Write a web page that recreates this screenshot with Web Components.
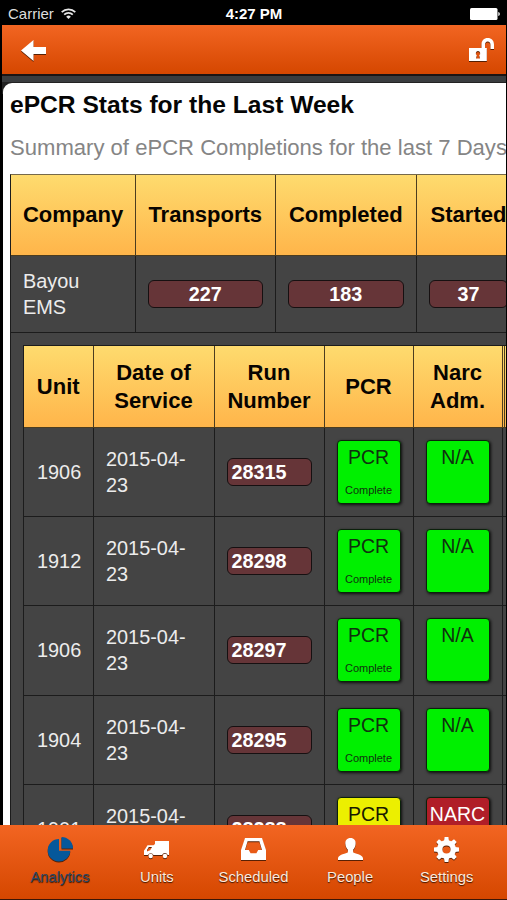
<!DOCTYPE html>
<html lang="en">
<head>
<meta charset="utf-8">
<title>ePCR Stats</title>
<style>
  html, body {
    margin: 0;
    height: 100%;
    overflow: hidden;
    background: #000;
    font-family: "Liberation Sans", Arial, sans-serif;
  }
</style>
</head>
<body>
<stats-app></stats-app>

<script>
/* Icon shapes, all drawn with the current text color */
var Icons = {
  back: '<path d="M0 10.5 12.5 0v7H25v7H12.5v7z"/>',
  unlock: '<path fill-rule="evenodd" d="M0 10h12.5V6.5C12.500 2.500 15 0 18.700 0S25 2.500 25 6.500V11h-3.500V7C21.500 4.600 20.500 3.400 18.700 3.400S16 4.600 16 7v3h1.800v13H0zM9 13a2.300 2.300 0 0 0-1.200 4.200L7 20.500h4l-.8-3.300A2.300 2.300 0 0 0 9 13z"/>',
  pie: '<path d="M11 2v11.800h11.300A11.300 11.300 0 1 1 11 2z"/><path d="M13.500 0A11.500 11.500 0 0 1 25 11.500H13.500z"/>',
  truck: '<path fill-rule="evenodd" d="M11 0h14v14h-1.300a3 3 0 0 0-5.600 0H9.500a3 3 0 0 0-5.500 0H0V9.500L1.200 8 3.500 4.300H9.500L11 3zM4.800 6 3 9v1.500L6.200 9.200 8 6z"/><circle cx="6.700" cy="15" r="2.200"/><circle cx="21" cy="15" r="2.200"/>',
  inbox: '<path fill-rule="evenodd" d="M4 0h17l4 12v10H0V12zM6.600 3.300 4 12h3.800l1.800 3.300h5.800l1.800-3.300H21L18.400 3.300z"/>',
  person: '<path d="M12.500 0C16 0 18 2.500 17.600 6c-.3 2.800-1.300 4.500-2.500 5.700v2.500c1 1.300 9.900 2.300 9.900 6V22H0v-1.800c0-3.700 8.900-4.700 9.900-6v-2.500C8.700 10.500 7.700 8.800 7.400 6 7 2.500 9 0 12.500 0z"/>',
  gear: '<circle cx="12.500" cy="12.500" r="6.800" fill="none" stroke="currentColor" stroke-width="5.400"/>'
    + [0, 45, 90, 135, 180, 225, 270, 315].map((angle) =>
      `<path d="M10 4 10.600 0h3.800L15 4z" transform="rotate(${angle} 12.500 12.500)"/>`).join('')
}

/* Fills the shadow root of an element with its styles and markup */
function render(element, html) {
  element.attachShadow({ mode: 'open' }).innerHTML = html
}

class AppIcon extends HTMLElement {
  connectedCallback() {
    var width = this.getAttribute('width') || 25
    var height = this.getAttribute('height') || 25

    render(this, `
      <style>
        :host {
          display: block;
          line-height: 0;
        }

        svg {
          fill: currentColor;
          overflow: visible;
          filter: drop-shadow(0 1px 0.5px rgba(40, 15, 0, .75));
        }
      </style>
      <svg width="${width}" height="${height}" viewBox="0 0 ${width} ${height}">
        ${Icons[this.getAttribute('name')]}
      </svg>`)
  }
}

class StatusBar extends HTMLElement {
  connectedCallback() {
    render(this, `
      <style>
        :host {
          display: grid;
          grid-template-columns: 1fr auto 1fr;
          align-items: center;
          flex: none;
          box-sizing: border-box;
          height: 25px;
          padding: 3px 7px 0 8px;
          background: #000;
          color: #ddd;
          font-size: 15px;
          line-height: 22px;
        }

        .carrier, .battery {
          display: flex;
          align-items: center;
        }

        .carrier { gap: 7px; }
        .wifi { margin-top: -2px; }
        .time { color: #fff; font-weight: bold; }
        .battery { justify-content: flex-end; }
      </style>
      <div class="carrier">
        <span>Carrier</span>
        <svg class="wifi" width="15" height="11" viewBox="0 0 15 11" fill="none" stroke="#e6e6e6" stroke-width="1.700">
          <path d="M.7 4.200a9.600 9.600 0 0 1 13.600 0M3.200 6.700a6.100 6.100 0 0 1 8.600 0"/>
          <path d="M7.500 11 5.200 8.700a3.300 3.300 0 0 1 4.600 0z" fill="#e6e6e6" stroke="none"/>
        </svg>
      </div>
      <div class="time">4:27 PM</div>
      <div class="battery">
        <svg width="30" height="12" viewBox="0 0 30 12" fill="#fff">
          <rect width="27.500" height="12" rx="1.500"/>
          <path d="M28.300 4c1 .3 1.500 1 1.500 2s-.5 1.700-1.500 2z"/>
        </svg>
      </div>`)
  }
}

class NavBar extends HTMLElement {
  connectedCallback() {
    render(this, `
      <style>
        :host {
          display: flex;
          justify-content: space-between;
          align-items: center;
          flex: none;
          box-sizing: border-box;
          height: 51px;
          margin: 0 1px 0 2px;
          padding: 2px 12px 0 19px;
          border-bottom: 2px solid #1b1413;
          background: linear-gradient(#f26522, #d54700);
          color: #fff;
        }

        [name="unlock"] { margin-bottom: 2px; }
      </style>
      <app-icon name="back" height="21"></app-icon>
      <app-icon name="unlock" height="23"></app-icon>`)
  }
}

/* Red rounded counter, centered unless it is placed with align="left" */
class CountPill extends HTMLElement {
  connectedCallback() {
    render(this, `
      <style>
        :host {
          display: block;
          box-sizing: border-box;
          height: 28px;
          padding: 0 4px;
          border: 1px solid #161011;
          border-radius: 6px;
          background: #663538;
          color: #fff;
          font-size: 19.800px;
          font-weight: bold;
          line-height: 26px;
          text-align: center;
        }

        :host([align="left"]) { text-align: left; }
      </style>
      <slot></slot>`)
  }
}

/* Square colored by its state: complete, pending or missing */
class StateBadge extends HTMLElement {
  connectedCallback() {
    render(this, `
      <style>
        :host {
          display: flex;
          flex-direction: column;
          justify-content: space-between;
          align-items: center;
          box-sizing: border-box;
          width: 64px;
          height: 64px;
          padding: 4px 0 6px;
          border: 1px solid #0b210b;
          border-radius: 4px;
          background: #00f000;
          box-shadow: 1px 1px 3px rgba(0, 0, 0, .8);
          color: #10300f;
          font-size: 19.500px;
          line-height: 24px;
        }

        :host([state="pending"]) { background: #ecef00; color: #191900; }
        :host([state="missing"]) { background: #b01e28; color: #fff; }

        .note { font-size: 11px; line-height: 14px; }
      </style>
      <span><slot></slot></span>
      <span class="note"><slot name="note"></slot></span>`)
  }
}

var tableStyle = `
  .row { display: grid; }

  .row > * {
    display: flex;
    align-items: center;
    box-sizing: border-box;
    border-right: 1px solid #1c1c1c;
    border-bottom: 1px solid #1c1c1c;
  }

  .head > * {
    justify-content: center;
    background: linear-gradient(#fedb6e, #ffb54a);
    border-color: #4c3d20;
    color: #080400;
    font-size: 22px;
    font-weight: bold;
    line-height: 28px;
    text-align: center;
  }
`

class RunTable extends HTMLElement {
  connectedCallback() {
    var runs = [
      ['1906', '28315'],
      ['1912', '28298'],
      ['1906', '28297'],
      ['1904', '28295'],
      ['1901', '28288', true]
    ]

    render(this, `
      <style>
        ${tableStyle}

        :host {
          display: block;
          width: 580px;
          border-left: 1px solid #1c1c1c;
          border-top: 1px solid #1c1c1c;
        }

        .row {
          grid-template-columns: 69.500px 121px 110px 89px 89px 2px 98px;
          height: 89.200px;
        }

        .head { height: 82px; }
        .head > * { padding-top: 1px; }
        .body > * { padding: 0 12px; }
        .body > :nth-child(1) { padding-left: 13px; }
        .body > :nth-child(2) { padding-left: 12.500px; }
        .body > :nth-child(3) { padding-right: 12px; }
        count-pill { flex: 1; }
        state-badge { flex: none; }
      </style>
      <div class="row head">
        <div>Unit</div>
        <div>Date of<br>Service</div>
        <div>Run<br>Number</div>
        <div>PCR</div>
        <div>Narc<br>Adm.</div>
        <div></div>
        <div></div>
      </div>
      ${runs.map(([unit, number, open]) => `
        <div class="row body">
          <div>${unit}</div>
          <div>2015-04-<br>23</div>
          <div><count-pill align="left">${number}</count-pill></div>
          <div>${open
            ? '<state-badge state="pending">PCR</state-badge>'
            : '<state-badge>PCR<span slot="note">Complete</span></state-badge>'}</div>
          <div>${open
            ? '<state-badge state="missing">NARC</state-badge>'
            : '<state-badge>N/A</state-badge>'}</div>
          <div></div>
          <div></div>
        </div>`).join('')}`)
  }
}

class CompanyTable extends HTMLElement {
  connectedCallback() {
    render(this, `
      <style>
        ${tableStyle}

        :host {
          display: block;
          width: 620px;
          border: 1px solid #1c1c1c;
          border-top-color: #76694a;
          background: #444;
          color: #ececec;
          font-size: 19.900px;
          line-height: 26px;
        }

        .row { grid-template-columns: 125px 139.500px 141.500px 104px 1fr; }
        .head { height: 81px; }
        .body { height: 77px; }
        .body > * { padding: 0 12px; }
        count-pill { flex: 1; }
        run-table { margin: 12px 0 0 12px; }
      </style>
      <div class="row head">
        <div>Company</div>
        <div>Transports</div>
        <div>Completed</div>
        <div>Started</div>
        <div></div>
      </div>
      <div class="row body">
        <div>Bayou<br>EMS</div>
        <div><count-pill>227</count-pill></div>
        <div><count-pill>183</count-pill></div>
        <div><count-pill>37</count-pill></div>
        <div></div>
      </div>
      <run-table></run-table>`)
  }
}

class StatsPanel extends HTMLElement {
  connectedCallback() {
    render(this, `
      <style>
        :host {
          display: block;
          flex: 1;
          min-height: 0;
          overflow: hidden;
          margin: 0 1px 0 2px;
          background: #000;
        }

        .strip {
          padding: 7px 0 0 1px;
          background: linear-gradient(#393c3e 0 6px, #222 6px 18px, #000 18px);
        }

        .card {
          padding: 0 0 0 7px;
          border-top-left-radius: 9px;
          background: #fff;
          white-space: nowrap;
        }

        h1, p { margin: 0; }

        h1 {
          padding-top: 7px;
          color: #050505;
          font-size: 24.600px;
          line-height: 30px;
        }

        p {
          padding: 13px 0 12px;
          color: #858585;
          font-size: 22.080px;
          line-height: 29px;
        }
      </style>
      <div class="strip">
        <div class="card">
          <h1><slot name="title"></slot></h1>
          <p><slot name="summary"></slot></p>
          <company-table></company-table>
        </div>
      </div>`)
  }
}

class TabItem extends HTMLElement {
  connectedCallback() {
    render(this, `
      <style>
        :host {
          display: flex;
          flex-direction: column;
          align-items: center;
          flex: 1;
          color: #fff;
          font-size: 14.800px;
          line-height: 18px;
          text-shadow: 0 1px 1px rgba(40, 15, 0, .9);
        }

        :host([active]) { color: #06589b; }
        :host([active]) .label { color: #294765; }

        .icon {
          display: flex;
          align-items: center;
          height: 26px;
          margin-bottom: 6px;
        }

        .label { color: #ffe9dd; }
      </style>
      <div class="icon">
        <app-icon name="${this.getAttribute('icon')}" height="${this.getAttribute('size')}"></app-icon>
      </div>
      <span class="label"><slot></slot></span>`)
  }
}

class TabBar extends HTMLElement {
  connectedCallback() {
    render(this, `
      <style>
        :host {
          display: flex;
          flex: none;
          box-sizing: border-box;
          height: 75px;
          padding: 11px 12px 0;
          border-bottom: 1px solid #3a1607;
          background: linear-gradient(#f26522, #d54700);
        }
      </style>
      <slot></slot>`)
  }
}

class StatsApp extends HTMLElement {
  connectedCallback() {
    render(this, `
      <style>
        :host {
          display: flex;
          flex-direction: column;
          height: 100vh;
          overflow: hidden;
        }
      </style>
      <status-bar></status-bar>
      <nav-bar></nav-bar>
      <stats-panel>
        <span slot="title">ePCR Stats for the Last Week</span>
        <span slot="summary">Summary of ePCR Completions for the last 7 Days</span>
      </stats-panel>
      <tab-bar>
        <tab-item icon="pie" size="25" active>Analytics</tab-item>
        <tab-item icon="truck" size="17">Units</tab-item>
        <tab-item icon="inbox" size="22">Scheduled</tab-item>
        <tab-item icon="person" size="22">People</tab-item>
        <tab-item icon="gear" size="25">Settings</tab-item>
      </tab-bar>`)
  }
}

window.customElements.define('app-icon', AppIcon)
window.customElements.define('status-bar', StatusBar)
window.customElements.define('nav-bar', NavBar)
window.customElements.define('count-pill', CountPill)
window.customElements.define('state-badge', StateBadge)
window.customElements.define('run-table', RunTable)
window.customElements.define('company-table', CompanyTable)
window.customElements.define('stats-panel', StatsPanel)
window.customElements.define('tab-item', TabItem)
window.customElements.define('tab-bar', TabBar)
window.customElements.define('stats-app', StatsApp)
</script>
</body>
</html>
